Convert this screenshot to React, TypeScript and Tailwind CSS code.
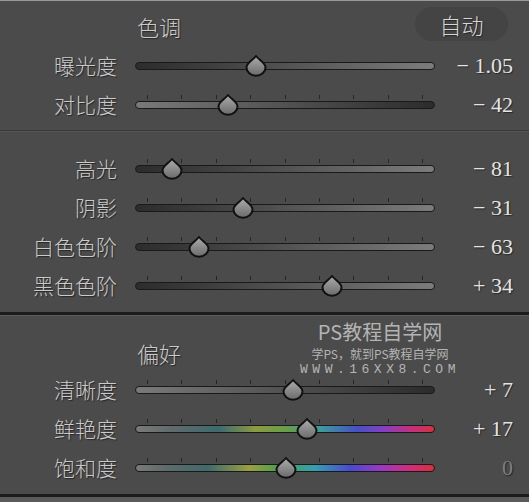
import React from 'react';

type Row = {
  label: string;
  value: string;
  pos: number;
  track: string;
  ticks?: boolean;
  dim?: boolean;
};

const TICKS = [12, 46, 81, 115, 150, 184, 218, 253, 287];

const tone: Row[] = [
  { label: '曝光度', value: '− 1.05', pos: 121, track: 'bg-linear-to-r from-[#2c2c2c] to-[#7c7c7c]', ticks: false },
  { label: '对比度', value: '− 42', pos: 93, track: 'bg-linear-to-r from-[#7a7a7a] to-[#2c2c2c]' },
];

const tone2: Row[] = [
  { label: '高光', value: '− 81', pos: 37, track: 'bg-linear-to-r from-[#2c2c2c] to-[#7c7c7c]' },
  { label: '阴影', value: '− 31', pos: 108, track: 'bg-linear-to-r from-[#2c2c2c] to-[#7c7c7c]' },
  { label: '白色色阶', value: '− 63', pos: 64, track: 'bg-linear-to-r from-[#2c2c2c] to-[#7c7c7c]' },
  { label: '黑色色阶', value: '+ 34', pos: 197, track: 'bg-linear-to-r from-[#2c2c2c] to-[#7c7c7c]' },
];

const presence: Row[] = [
  { label: '清晰度', value: '+ 7', pos: 158, track: 'bg-linear-to-r from-[#7a7a7a] to-[#2c2c2c]' },
  {
    label: '鲜艳度',
    value: '+ 17',
    pos: 172,
    track:
      'bg-[linear-gradient(to_right,#7a7a7a_0%,#5f6b6b_12%,#3f6a6e_28%,#8c9a42_40%,#6a9e48_50%,#3d9b9b_62%,#4651c4_74%,#8240c2_83%,#c2307e_92%,#d23444_100%)]',
  },
  {
    label: '饱和度',
    value: '0',
    pos: 151,
    dim: true,
    track:
      'bg-[linear-gradient(to_right,#7a7a7a_0%,#5f6b6b_10%,#3f6a6e_24%,#9aa040_38%,#4aa050_48%,#35a0b0_60%,#4a4ad0_72%,#9a38c4_82%,#d02c7a_92%,#d8303e_100%)]',
  },
];

function Thumb({ left }: { left: number }) {
  return (
    <svg
      className="absolute top-[9px]"
      style={{ left: left - 11 }}
      width="22"
      height="22"
      viewBox="0 0 22 22"
    >
      <defs>
        <linearGradient id="thumbFill" x1="0" y1="0" x2="0" y2="1">
          <stop offset="0" stopColor="#acacac" />
          <stop offset="1" stopColor="#6a6a6a" />
        </linearGradient>
      </defs>
      <path
        d="M11 1 C14 5 20.5 8 20.5 12.5 A9.5 8.3 0 0 1 1.5 12.5 C1.5 8 8 5 11 1 Z"
        fill="url(#thumbFill)"
        stroke="#111"
        strokeWidth="2"
        strokeLinejoin="round"
      />
    </svg>
  );
}

function SliderRow({ row }: { row: Row }) {
  return (
    <div className="flex h-[39px] items-center">
      <div className="w-[117px] text-right text-[21px] font-light leading-none text-[#cacaca] [text-shadow:1px_1px_1px_#262626]">
        {row.label}
      </div>
      <div className="relative ml-[18px] flex h-[39px] w-[300px] items-center">
        {row.ticks !== false &&
          TICKS.map(t => (
            <div key={t} className="absolute top-[10px] h-[4px] w-px bg-[#262626]" style={{ left: t }} />
          ))}
        <div className={`h-[8px] w-[300px] rounded-full border-[1.5px] border-[#1a1a1a] ${row.track}`} />
        <Thumb left={row.pos} />
      </div>
      <div
        className={`flex-1 pr-[16px] text-right font-['Liberation_Serif',serif] text-[22px] leading-none [text-shadow:1px_1px_1px_#262626] ${
          row.dim ? 'text-[#7e7e7e]' : 'text-[#e4e4e4]'
        }`}
      >
        {row.value}
      </div>
    </div>
  );
}

export default function App() {
  return (
    <div className="relative h-[502px] w-[529px] overflow-hidden bg-[#4b4b4b] font-['Noto_Sans_CJK_SC','Noto_Sans',sans-serif]">
      <div className="h-px bg-[#9a9a9a]" />

      <div className="h-[129px]">
        <div className="flex h-[45px] items-start pt-[6px]">
          <div className="ml-[137px] mt-[8px] text-[22px] font-light leading-none text-[#cacaca] [text-shadow:1px_1px_1px_#262626]">
            色调
          </div>
          <div className="ml-auto mr-[21px] flex h-[34px] w-[93px] items-center justify-center rounded-full bg-[#444444] text-[22px] font-light leading-none text-[#d6d6d6] [text-shadow:1px_1px_1px_#262626]">
            自动
          </div>
        </div>
        {tone.map(r => (
          <SliderRow key={r.label} row={r} />
        ))}
      </div>

      <div className="h-px bg-[#383838]" />
      <div className="h-px bg-[#555555]" />

      <div className="h-[180px] pt-[17px]">
        {tone2.map(r => (
          <SliderRow key={r.label} row={r} />
        ))}
      </div>

      <div className="h-[3px] bg-[#1c1c1c]" />
      <div className="h-px bg-[#5c5c5c]" />

      <div className="h-[178px]">
        <div className="h-[54px] pt-[26px]">
          <div className="ml-[137px] text-[22px] font-light leading-none text-[#cacaca] [text-shadow:1px_1px_1px_#262626]">
            偏好
          </div>
        </div>
        {presence.map(r => (
          <SliderRow key={r.label} row={r} />
        ))}
      </div>

      <div className="h-[3px] bg-[#1c1c1c]" />
      <div className="h-[5px] bg-[#5a5a5a]" />

      <div className="pointer-events-none absolute left-[302px] top-[322px] flex w-[156px] flex-col items-center text-[#b4b4b4]">
        <div className="text-[20px] leading-[20px]">PS教程自学网</div>
        <div className="mt-[5px] text-[12px] leading-[13px]">学PS，就到PS教程自学网</div>
        <div className="mt-[3px] font-['Liberation_Mono',monospace] text-[13px] leading-[14px] tracking-[4.5px]">
          WWW.16XX8.COM
        </div>
      </div>
    </div>
  );
}
